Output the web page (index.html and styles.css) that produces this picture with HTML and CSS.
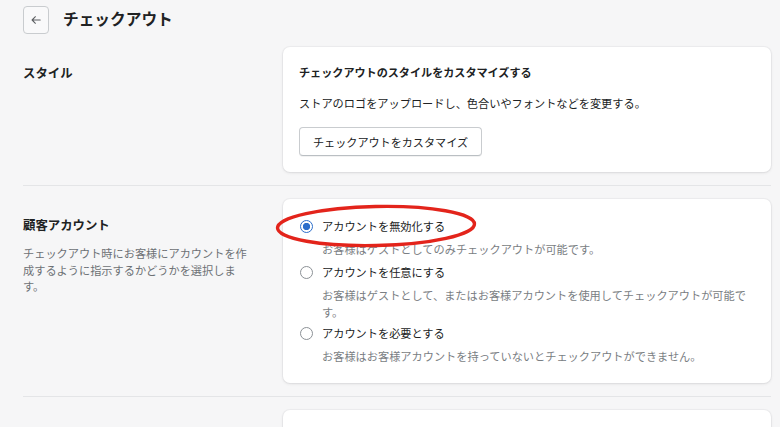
FILE: index.html
```html
<!DOCTYPE html>
<html lang="ja">
  <head>
    <meta charset="utf-8">
    <title>チェックアウト</title>
    <link rel="stylesheet" href="styles.css">
  </head>
  <body>
    <div class="page">
      <header class="header">
        <button class="back" aria-label="戻る">
          <svg width="12" height="12" viewBox="0 0 20 20"><path d="M17 10H3.5M9 4.5L3.5 10L9 15.5" fill="none" stroke="#5c5f62" stroke-width="1.8" stroke-linecap="round" stroke-linejoin="round"/></svg>
        </button>
        <h1 class="title">チェックアウト</h1>
      </header>

      <section class="section">
        <div class="aside">
          <h2 class="aside-title">スタイル</h2>
        </div>
        <div class="card">
          <h3 class="card-title">チェックアウトのスタイルをカスタマイズする</h3>
          <p class="card-text">ストアのロゴをアップロードし、色合いやフォントなどを変更する。</p>
          <button class="btn">チェックアウトをカスタマイズ</button>
        </div>
      </section>

      <section class="section">
        <div class="aside">
          <h2 class="aside-title">顧客アカウント</h2>
          <p class="aside-text">チェックアウト時にお客様にアカウントを作成するように指示するかどうかを選択します。</p>
        </div>
        <div class="card card-options">
          <div class="option">
            <label class="option-label"><span class="radio checked"></span>アカウントを無効化する</label>
            <p class="option-help">お客様はゲストとしてのみチェックアウトが可能です。</p>
          </div>
          <div class="option">
            <label class="option-label"><span class="radio"></span>アカウントを任意にする</label>
            <p class="option-help">お客様はゲストとして、またはお客様アカウントを使用してチェックアウトが可能です。</p>
          </div>
          <div class="option">
            <label class="option-label"><span class="radio"></span>アカウントを必要とする</label>
            <p class="option-help">お客様はお客様アカウントを持っていないとチェックアウトができません。</p>
          </div>
          <svg class="mark" width="204" height="46" viewBox="0 0 204 46"><ellipse cx="102" cy="23" rx="98.5" ry="19.5" fill="none" stroke="#e3241b" stroke-width="3.4" transform="rotate(-1.2 102 23)"/></svg>
        </div>
      </section>

      <section class="section">
        <div class="aside"></div>
        <div class="card card-empty"></div>
      </section>
    </div>
  </body>
</html>
```

FILE: styles.css
```css
body { margin: 0; background: #f6f6f7; color: #202223; font-family: "Noto Sans CJK JP", "Noto Sans", sans-serif; font-size: 11.2px; overflow: hidden; }
h1, h2, h3, p { margin: 0; }

.page { padding: 6px 9px 0 23px; }

.header { display: flex; align-items: center; gap: 14px; height: 28px; margin-bottom: 13px; }
.back { width: 26px; height: 28px; padding: 0; border: 1px solid #c9cccf; border-radius: 4px; background: #f9f9fa; display: flex; align-items: center; justify-content: center; }
.title { font-size: 15.7px; font-weight: 700; line-height: 20px; margin-top: -2px; }

.section { display: grid; grid-template-columns: 240px 1fr; gap: 20px; padding: 13px 0; border-bottom: 1px solid #e4e5e7; }
.section:first-of-type { padding-top: 0; }

.aside { padding-top: 16.5px; }
.aside-title { font-size: 12.4px; font-weight: 700; line-height: 18px; }
.aside-text { max-width: 228px; margin-top: 11.5px; color: #6d7175; line-height: 16.5px; }

.card { position: relative; background: #fff; border-radius: 7px; padding: 16px; box-shadow: 0 0 0 1px rgba(63, 63, 68, 0.04), 0 1px 3px rgba(63, 63, 68, 0.12); }
.card-title { font-size: 11.1px; font-weight: 700; line-height: 18px; }
.card-text { margin-top: 13.5px; line-height: 17px; }
.btn { margin-top: 15.5px; height: 29px; padding: 0 13px; border: 1px solid #c9cccf; border-bottom-color: #babfc3; border-radius: 4px; background: #fff; color: #202223; font-family: inherit; font-size: 11.1px; box-shadow: 0 1px 0 rgba(0, 0, 0, 0.05); }

.card-options { padding: 17px 16px 18.5px 17px; }
.option + .option { margin-top: 4.5px; }
.option:last-of-type { margin-top: 2.5px; }
.option-label { display: flex; align-items: center; gap: 9px; line-height: 20px; }
.option-help { margin: 4.5px 0 0 22px; color: #7a7e83; line-height: 17px; }

.radio { width: 13px; height: 13px; box-sizing: border-box; border: 1.5px solid #8c9196; border-radius: 50%; background: #fff; }
.radio.checked { border: 1.5px solid #2c6ecb; background: radial-gradient(circle, #2c6ecb 0 3.4px, #fff 3.9px); }

.mark { position: absolute; left: -9px; top: 4px; }

.card-empty { height: 40px; }
```
